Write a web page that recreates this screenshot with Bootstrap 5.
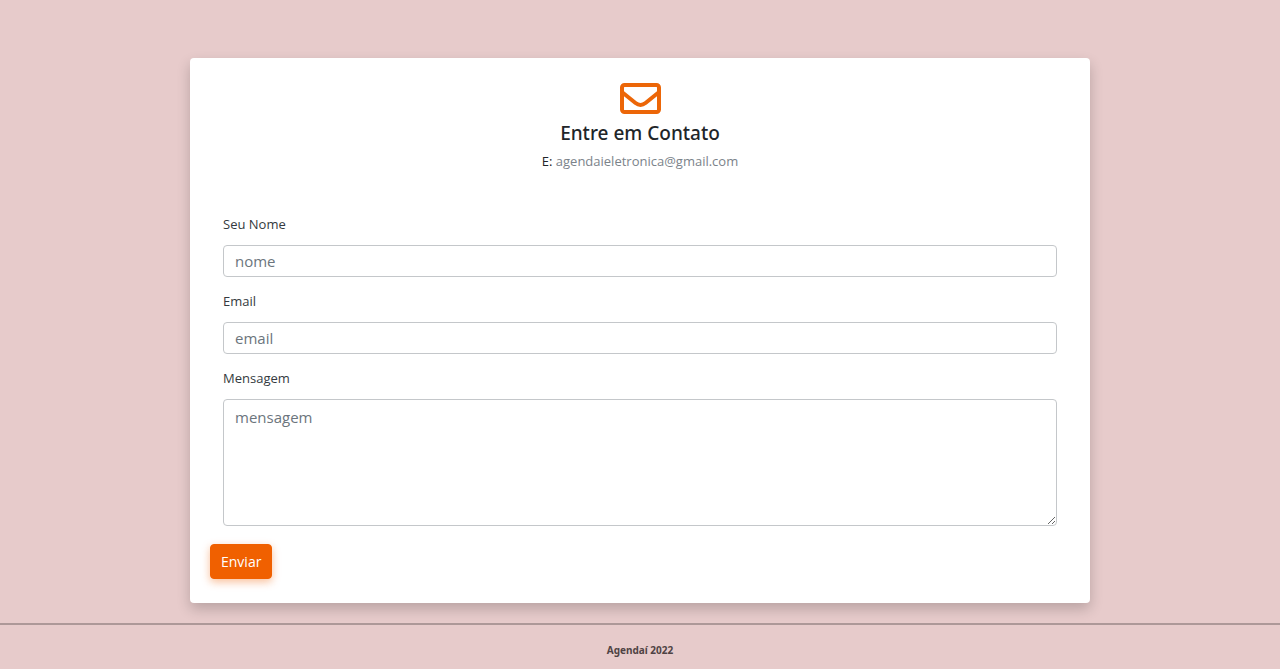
<!DOCTYPE html>
<html lang="pt-BR">
<head>
<meta charset="utf-8">
<meta name="viewport" content="width=device-width, initial-scale=1">
<title>Entre em Contato</title>
<link href="https://cdn.jsdelivr.net/npm/bootstrap@5.3.0/dist/css/bootstrap.min.css" rel="stylesheet">
<style>
  body { background: #e7cbcb; font-family: "Open Sans", "Noto Sans", sans-serif; font-size: 13px; line-height: 20px; color: #212529; }
  main { padding-top: 58px; padding-bottom: 20px; }
  .contact-card { max-width: 900px; padding: 24px 20px; border-radius: 4px; box-shadow: 0 6px 14px rgba(0, 0, 0, .2); }
  .contact-icon { margin-bottom: 6px; }
  .contact-title { margin-bottom: 6px; font-family: "Noto Sans", sans-serif; font-size: 19px; line-height: 24px; font-weight: 500; }
  .contact-mail, .contact-mail:hover { color: #7b838a; }
  .fields { padding: 0 13px; margin-top: 43px; }
  .field { margin-bottom: 14px; }
  .field .form-label { margin-bottom: 11px; color: #343a40; }
  .field .form-control { border-color: #c4c7ca; border-radius: 4px; padding: 3px 11px; font-size: 15px; line-height: 24px; }
  .field textarea.form-control { height: 127px; padding-top: 5px; }
  .field .form-control::placeholder { color: #6c757d; }
  .btn-send { --bs-btn-color: #fff; --bs-btn-bg: #f06000; --bs-btn-border-color: #f06000; --bs-btn-hover-color: #fff; --bs-btn-hover-bg: #d95600; --bs-btn-hover-border-color: #d95600; --bs-btn-border-radius: 4px; --bs-btn-padding-x: 10px; --bs-btn-padding-y: 5px; --bs-btn-font-size: 14px; --bs-btn-line-height: 23px; margin-top: 4px; box-shadow: 0 3px 8px rgba(240, 96, 0, .4); }
  footer { border-top: 2px solid #ad9898; padding: 15px 0 9px; font-family: "Noto Sans", sans-serif; font-size: 10px; color: #4f4344; }
</style>
</head>
<body>
<main class="container-fluid">
  <section class="contact-card bg-white mx-auto">
    <header class="text-center">
      <svg class="contact-icon d-block mx-auto" width="41" height="33" viewBox="0 0 41 33" fill="none" stroke="#ec6608" stroke-width="4" stroke-linejoin="round" aria-hidden="true">
        <rect x="2" y="3" width="37" height="27" rx="2.5"/>
        <path d="M2.5 10.5 15.5 21c3.600 2.800 6.400 2.800 10 0L38.500 10.500"/>
      </svg>
      <h1 class="contact-title">Entre em Contato</h1>
      <p class="mb-0">E: <a class="contact-mail text-decoration-none" href="mailto:agendaieletronica@gmail.com">agendaieletronica@gmail.com</a></p>
    </header>
    <form>
      <div class="fields">
        <div class="field">
          <label class="form-label d-block" for="nome">Seu Nome</label>
          <input class="form-control" id="nome" type="text" placeholder="nome">
        </div>
        <div class="field">
          <label class="form-label d-block" for="email">Email</label>
          <input class="form-control" id="email" type="email" placeholder="email">
        </div>
        <div class="field">
          <label class="form-label d-block" for="mensagem">Mensagem</label>
          <textarea class="form-control" id="mensagem" placeholder="mensagem"></textarea>
        </div>
      </div>
      <button class="btn btn-send" type="submit">Enviar</button>
    </form>
  </section>
</main>
<footer class="text-center fw-bold">Agendaí 2022</footer>
<script src="https://cdn.jsdelivr.net/npm/bootstrap@5.3.0/dist/js/bootstrap.bundle.min.js"></script>
</body>
</html>
